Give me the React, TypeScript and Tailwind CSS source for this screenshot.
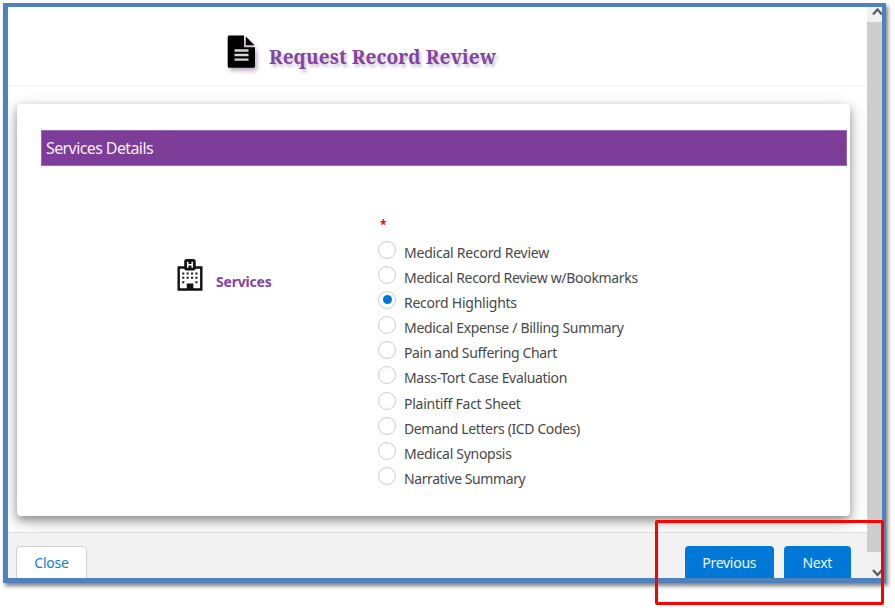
import React from "react";

const services = [
  { name: "Medical Record Review", track: "tracking-[-0.23px]" },
  { name: "Medical Record Review w/Bookmarks", track: "tracking-[-0.31px]" },
  { name: "Record Highlights", track: "tracking-[-0.25px]" },
  { name: "Medical Expense / Billing Summary", track: "tracking-[-0.31px]" },
  { name: "Pain and Suffering Chart", track: "tracking-[-0.35px]" },
  { name: "Mass-Tort Case Evaluation", track: "tracking-[-0.33px]" },
  { name: "Plaintiff Fact Sheet", track: "tracking-[-0.26px]" },
  { name: "Demand Letters (ICD Codes)", track: "tracking-[-0.38px]" },
  { name: "Medical Synopsis", track: "tracking-[-0.29px]" },
  { name: "Narrative Summary", track: "tracking-[-0.41px]" },
];

function DocumentIcon() {
  return (
    <svg
      width="29"
      height="34"
      viewBox="0 0 29 34"
      className="shrink-0 drop-shadow-[2px_3px_2px_rgba(80,50,100,0.4)]"
    >
      <path d="M2 0.5H17V12.300H28V31.200a1.500 1.500 0 0 1-1.500 1.500H2.200a1.500 1.500 0 0 1-1.500-1.500V2A1.500 1.500 0 0 1 2 .5Z" fill="#000" />
      <path d="M18.800 1.500v8.700h8.700Z" fill="#000" />
      <path d="M7.500 15.500H21.500M7.500 20H21.500M7.500 24.600H21.500" stroke="#d4d4d4" strokeWidth="2.300" />
    </svg>
  );
}

function HospitalIcon() {
  return (
    <svg width="26" height="33" viewBox="0 0 26 33" className="shrink-0">
      <path d="M1.700 9.500H24.300V31.500H1.700Z" fill="#fff" stroke="#111" strokeWidth="2.400" />
      <rect x="7.200" y="1" width="11.500" height="11.500" rx="2.500" fill="#111" />
      <path d="M10.700 3.700v6M15.200 3.700v6M10.700 6.700h4.500" stroke="#fff" strokeWidth="1.500" />
      <path
        d="M5.200 15.500h2.100M9.600 15.500h2.100M14 15.500h2.100M18.400 15.500h2.100M5.200 19.800h2.100M9.600 19.800h2.100M14 19.800h2.100M18.400 19.800h2.100M5.200 24.200h2.100M18.400 24.200h2.100"
        stroke="#222"
        strokeWidth="2.100"
      />
      <path d="M9.700 25.500h6.600v6.500H9.700z" fill="#111" />
    </svg>
  );
}

export default function App() {
  return (
    <div className="relative h-[612px] w-[895px] overflow-hidden bg-white pt-[3px] pl-[3px] font-['Noto_Sans','Open_Sans',sans-serif] text-[#484848]">
      <div className="flex h-[580px] w-[883px] overflow-hidden border-t-4 border-r-4 border-b-[5px] border-l-[5px] border-[#4f81bd] bg-white shadow-[2px_3px_4px_rgba(0,0,0,0.5)]">
        <main className="flex w-[859px] shrink-0 flex-col overflow-hidden">
          <header className="flex h-[80px] shrink-0 border-b-2 border-[#f8f8f8] pt-[28px] pl-[219px]">
            <DocumentIcon />
            <h1 className="mt-[6px] ml-[13px] font-['Noto_Serif','Droid_Serif','DejaVu_Serif_Condensed','DejaVu_Serif',serif] text-[19px] leading-[32px] font-bold tracking-[0.1px] whitespace-nowrap text-[#8244a0] [text-shadow:2px_3px_3px_rgba(80,50,100,0.3)]">
              Request Record Review
            </h1>
          </header>
          <section className="h-[445px] shrink-0 overflow-hidden pt-[17px] pl-[8.500px]">
            <div className="h-[411.500px] w-[833.500px] rounded-[4px] bg-white pt-[26px] pl-[24.500px] shadow-[0_4px_8px_rgba(0,0,0,0.35),0_6px_20px_rgba(0,0,0,0.19)]">
              <h2 className="h-[36px] w-[806px] border border-[#9b68b0] bg-[#7d3c98] pl-[4px] text-[16px] leading-[34px] font-normal tracking-[-0.6px] whitespace-nowrap text-[#f6effa]">
                Services Details
              </h2>
              <div className="flex">
                <div className="flex w-[337px] pt-[92px] pl-[136px]">
                  <HospitalIcon />
                  <span className="mt-[12px] ml-[13px] text-[14px] leading-[23px] font-bold tracking-[-0.2px] text-[#8345a0]">
                    Services
                  </span>
                </div>
                <div className="pt-[48px]">
                  <div className="h-[26.500px] pl-[2px] text-[12px] leading-[22px] font-bold text-[#e8001c]">*</div>
                  <ul>
                    {services.map((service, index) => (
                      <li key={service.name} className="flex h-[25.200px]">
                        <span className="flex size-[18px] shrink-0 items-center justify-center rounded-full border border-[#ccc] bg-white">
                          {index === 2 && <span className="size-[9px] rounded-full bg-[#0078d7]" />}
                        </span>
                        <span
                          className={`ml-[8px] text-[14px] leading-[23px] whitespace-nowrap ${service.track}`}
                        >
                          {service.name}
                        </span>
                      </li>
                    ))}
                  </ul>
                </div>
              </div>
            </div>
          </section>
          <footer className="flex h-[46px] shrink-0 border-t border-[#dedede] bg-[#f2f2f2] pt-[13px] pl-[8px] text-[14px] tracking-[-0.25px]">
            <button className="flex h-[36px] w-[71px] justify-center rounded-[4px] border border-[#d0d0d0] bg-white leading-[32px] text-[#0b7fdb]">
              Close
            </button>
            <button className="ml-[597.500px] flex h-[36px] w-[89.500px] justify-center rounded-[4px] bg-[#0078d7] leading-[34px] text-[#eef6fd]">
              Previous
            </button>
            <button className="ml-[10px] flex h-[36px] w-[66.500px] justify-center rounded-[4px] bg-[#0078d7] leading-[34px] text-[#eef6fd]">
              Next
            </button>
          </footer>
        </main>
        <aside className="flex w-[15px] shrink-0 flex-col overflow-hidden bg-[#f1f1f1]">
          <div className="flex h-[15px] shrink-0 pl-[5px]">
            <svg width="12" height="10" viewBox="0 0 12 10" className="shrink-0">
              <path d="M1 7.500L5.500 2.500L10 7.500" fill="none" stroke="#606060" strokeWidth="2.400" />
            </svg>
          </div>
          <div className="h-[530px] shrink-0 bg-[#cdcdcd]" />
          <div className="flex h-[26px] shrink-0 pt-[16px] pl-[5px]">
            <svg width="12" height="10" viewBox="0 0 12 10" className="shrink-0">
              <path d="M1 2L5.500 7L10 2" fill="none" stroke="#606060" strokeWidth="2.400" />
            </svg>
          </div>
        </aside>
      </div>
      <div className="absolute top-[520px] left-[655px] h-[85px] w-[229px] rounded-[2px] border-[3px] border-[#ff0000]" />
    </div>
  );
}
